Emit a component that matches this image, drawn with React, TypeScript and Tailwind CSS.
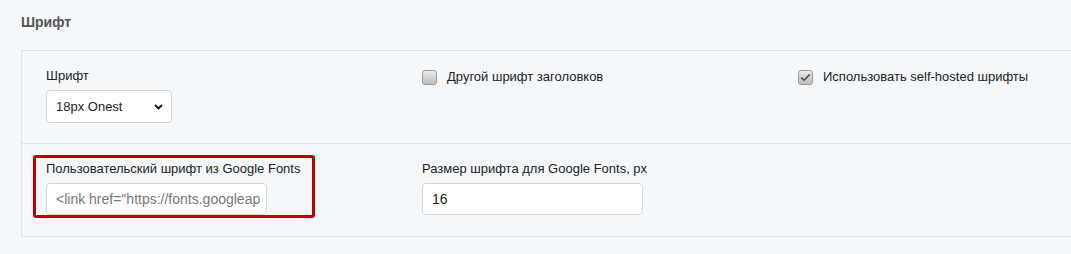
function Checkbox({ checked }: { checked?: boolean }) {
  return (
    <span className="mt-[2px] flex h-[15px] w-[15px] shrink-0 items-center justify-center rounded-[3px] border border-[#9a9a9a] bg-gradient-to-b from-[#ececec] to-[#bcbcbc]">
      {checked && (
        <svg width="11" height="9" viewBox="0 0 11 9" fill="none">
          <path d="M1.2 4.6 L4 7.3 L9.8 1.4" stroke="#4a4a4a" strokeWidth="1.5" />
        </svg>
      )}
    </span>
  );
}

export default function App() {
  return (
    <div
      className="h-[254px] overflow-hidden bg-[#f5f8fa] pl-[21px] pt-[14px] text-[13px] text-[#222]"
      style={{ fontFamily: '"Liberation Sans", Arial, sans-serif' }}
    >
      {/* Section title */}
      <h2 className="text-[14px] leading-[16px] font-bold text-[#555]">Шрифт</h2>

      <div className="mt-[20px] w-[1100px]">
        {/* Row 1 */}
        <div className="grid h-[93px] grid-cols-[376px_376px_1fr] border-t border-l border-[#dde4ea] pl-[24px] pt-[17px]">
          <div>
            <div className="leading-[15px]">Шрифт</div>
            <div className="mt-[7px] flex h-[33px] w-[126px] items-center justify-between rounded-[4px] border border-[#cfd6dc] bg-white pl-[9px] pr-[8px]">
              <span>18px Onest</span>
              <svg width="9" height="6" viewBox="0 0 9 6" fill="none">
                <path d="M1 1 L4.5 4.5 L8 1" stroke="#111" strokeWidth="1.8" />
              </svg>
            </div>
          </div>
          <div className="flex items-start gap-[10px] leading-[15px]">
            <Checkbox />
            <span className="mt-[1px]">Другой шрифт заголовков</span>
          </div>
          <div className="flex items-start gap-[10px] leading-[15px]">
            <Checkbox checked />
            <span className="mt-[1px]">Использовать self-hosted шрифты</span>
          </div>
        </div>

        {/* Row 2 */}
        <div className="relative grid h-[94px] grid-cols-[376px_376px_1fr] border-t border-b border-l border-[#dde4ea] pl-[24px] pt-[17px]">
          <div>
            <div className="leading-[15px]">Пользовательский шрифт из Google Fonts</div>
            <div className="mt-[7px] flex h-[32px] w-[221px] items-center overflow-hidden rounded-[4px] border border-[#cfd6dc] bg-white pl-[9px] text-[14px] whitespace-nowrap text-[#777]">
              &lt;link href="https://fonts.googleap
            </div>
          </div>
          <div>
            <div className="leading-[15px]">Размер шрифта для Google Fonts, px</div>
            <div className="mt-[7px] flex h-[32px] w-[221px] items-center rounded-[4px] border border-[#cfd6dc] bg-white pl-[9px] text-[14px]">
              16
            </div>
          </div>
          {/* highlight */}
          <div className="absolute left-[11px] top-[11px] h-[63px] w-[282px] rounded-[3px] border-[3px] border-[#c00000]" />
        </div>
      </div>
    </div>
  );
}
